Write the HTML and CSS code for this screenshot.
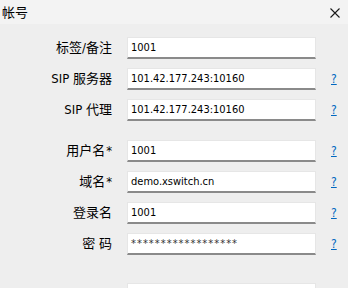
FILE: index.html
```html
<!DOCTYPE html>
<html lang="zh-CN">
<head>
    <meta charset="UTF-8">
    <title>帐号</title>
    <link rel="stylesheet" href="styles.css">
</head>
<body>
    <div class="titlebar">
        <span class="title">帐号</span>
        <span class="close">
            <svg width="10" height="10" viewBox="0 0 10 10"><path d="M0.5 0.5 L9.5 9.5 M9.5 0.5 L0.5 9.5" stroke="#1a1a1a" stroke-width="1.1"/></svg>
        </span>
    </div>

    <div class="form">
        <div class="row">
            <div class="label">标签/备注</div>
            <div class="field">1001</div>
            <span class="help"></span>
        </div>
        <div class="row">
            <div class="label">SIP 服务器</div>
            <div class="field">101.42.177.243:10160</div>
            <a class="help" href="#">?</a>
        </div>
        <div class="row">
            <div class="label">SIP 代理</div>
            <div class="field">101.42.177.243:10160</div>
            <a class="help" href="#">?</a>
        </div>

        <div class="row sep">
            <div class="label">用户名<span class="req">*</span></div>
            <div class="field">1001</div>
            <a class="help" href="#">?</a>
        </div>
        <div class="row">
            <div class="label">域名<span class="req">*</span></div>
            <div class="field">demo.xswitch.cn</div>
            <a class="help" href="#">?</a>
        </div>
        <div class="row">
            <div class="label">登录名</div>
            <div class="field">1001</div>
            <a class="help" href="#">?</a>
        </div>
        <div class="row">
            <div class="label">密 码</div>
            <div class="field pass">******************</div>
            <a class="help" href="#">?</a>
        </div>

        <div class="row sep2">
            <div class="label"></div>
            <div class="field"></div>
            <span class="help"></span>
        </div>
    </div>
</body>
</html>
```

FILE: styles.css
```css
* {
    margin: 0;
    padding: 0;
    box-sizing: border-box;
}

body {
    background-color: #eeeeee;
    font-family: 'DejaVu Sans Condensed', 'Noto Sans CJK SC', sans-serif;
    color: #000;
    overflow: hidden;
}

.titlebar {
    height: 24px;
    background-color: #f3f3f3;
    display: flex;
    align-items: center;
    justify-content: space-between;
    padding: 0 8px 0 2px;
}

.title {
    font-family: 'Noto Sans CJK SC', sans-serif;
    font-size: 13px;
    margin-top: -2px;
}

.close {
    display: flex;
    margin-top: 1px;
}

.form {
    display: flex;
    flex-direction: column;
    gap: 9px;
    padding-top: 13px;
}

.row {
    display: flex;
    align-items: center;
    height: 22px;
    flex-shrink: 0;
}

.sep {
    margin-top: 10px;
}

.sep2 {
    margin-top: 19px;
}

.label {
    width: 112px;
    text-align: right;
    font-family: 'DejaVu Sans Condensed', 'Noto Sans CJK SC', sans-serif;
    font-size: 13px;
    line-height: 22px;
}

.req {
    margin-left: 1px;
}

.field {
    width: 189px;
    height: 22px;
    margin-left: 15px;
    background-color: #ffffff;
    border: 1px solid #e6e6e6;
    border-bottom: 2px solid #8a8a8a;
    font-size: 11px;
    line-height: 19px;
    padding-left: 3px;
}

.pass {
    color: #333;
    letter-spacing: 1px;
}

.help {
    margin-left: 15px;
    font-size: 12px;
    color: #0067c0;
    line-height: 22px;
}
```
